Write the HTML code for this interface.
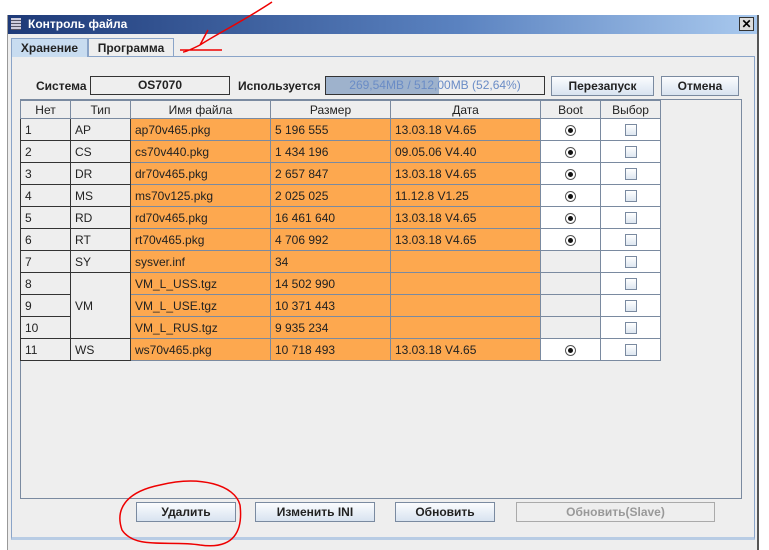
<!DOCTYPE html>
<html><head><style>
*{margin:0;padding:0;box-sizing:border-box}
body{width:769px;height:550px;background:#fff;font-family:"Liberation Sans",Arial,sans-serif;font-size:12px;color:#222;position:relative;overflow:hidden}
.a{position:absolute}
.win{left:7px;top:15px;width:752px;height:535px;background:#eeeeee;border-left:1px solid #999;border-right:2px solid #555}
.title{left:8px;top:15px;width:749px;height:19px;background:linear-gradient(90deg,#1e3a78,#5a82c0 60%,#a9c9ee);color:#fff;font-weight:bold;font-size:12px;line-height:19px;padding-left:20px}
.btn{background:linear-gradient(#fbfcfe,#d8e3f0);border:1px solid #7a8aa0;font-weight:bold;font-size:12px;text-align:center;color:#222}
table{border-collapse:collapse;position:absolute;left:20px;top:100px;table-layout:fixed}
td{height:22px;border:1px solid #7a8aa0;padding-left:4px;font-size:12px;white-space:nowrap}
th{height:18px;border:1px solid #7a8aa0;font-weight:normal;background:#eeeeee;font-size:12px}
td.h{background:#eeeeee;border-color:#333}
td.o{background:#fda84f}
td.w{background:#fff;text-align:center;padding:0}
td.g{background:#eeeeee}
.rb{display:inline-block;width:11px;height:11px;border-radius:50%;border:1px solid #555;background:#fff;position:relative;vertical-align:middle}
.rb:after{content:"";position:absolute;left:2px;top:2px;width:5px;height:5px;border-radius:50%;background:#111}
.cb{display:inline-block;width:12px;height:12px;border:1px solid #7a8aa0;background:linear-gradient(#fff,#dde6f0);vertical-align:middle}
</style></head><body>
<div class="a win"></div>
<div class="a title">Контроль файла</div>
<div class="a" style="left:11px;top:18px;width:10px;height:12px;background:repeating-linear-gradient(#ccd 0 2px,#556 2px 3px)"></div>
<div class="a" style="left:739px;top:17px;width:15px;height:14px;background:#ddd;border:1px solid #333;font-size:12px;line-height:12px;text-align:center;color:#000;font-weight:bold">✕</div>
<!-- tabs -->
<div class="a" style="left:11px;top:56px;width:744px;height:484px;border:1px solid #8aa4c8;border-bottom:3px solid #b8cce4"></div>
<div class="a" style="left:11px;top:38px;width:77px;height:19px;background:#c8dcf0;border:1px solid #8aa4c8;border-bottom:none;font-weight:bold;text-align:center;line-height:18px">Хранение</div>
<div class="a" style="left:88px;top:38px;width:86px;height:18px;background:#eeeeee;border:1px solid #8aa4c8;border-bottom:none;font-weight:bold;text-align:center;line-height:18px">Программа</div>
<!-- top row -->
<div class="a" style="left:36px;top:79px;font-weight:bold">Система</div>
<div class="a" style="left:90px;top:76px;width:140px;height:19px;border:1px solid #333;text-align:center;font-weight:bold;line-height:17px">OS7070</div>
<div class="a" style="left:238px;top:79px;font-weight:bold">Используется</div>
<div class="a" style="left:325px;top:76px;width:220px;height:19px;border:1px solid #333;background:linear-gradient(90deg,#9eb2cc 0 113px,#eeeeee 113px);text-align:center;line-height:17px;color:#6a8cc6">269,54MB / 512,00MB (52,64%)</div>
<div class="a btn" style="left:551px;top:76px;width:103px;height:20px;line-height:18px">Перезапуск</div>
<div class="a btn" style="left:661px;top:76px;width:78px;height:20px;line-height:18px">Отмена</div>
<!-- table panel -->
<div class="a" style="left:20px;top:99px;width:722px;height:400px;border:1px solid #7a8aa0"></div>
<table>
<colgroup><col style="width:50px"><col style="width:60px"><col style="width:140px"><col style="width:120px"><col style="width:150px"><col style="width:60px"><col style="width:60px"></colgroup>
<tr><th>Нет</th><th>Тип</th><th>Имя файла</th><th>Размер</th><th>Дата</th><th>Boot</th><th>Выбор</th></tr>
<tr><td class="h">1</td><td class="h">AP</td><td class="o">ap70v465.pkg</td><td class="o">5 196 555</td><td class="o">13.03.18 V4.65</td><td class="w"><span class="rb"></span></td><td class="w"><span class="cb"></span></td></tr>
<tr><td class="h">2</td><td class="h">CS</td><td class="o">cs70v440.pkg</td><td class="o">1 434 196</td><td class="o">09.05.06 V4.40</td><td class="w"><span class="rb"></span></td><td class="w"><span class="cb"></span></td></tr>
<tr><td class="h">3</td><td class="h">DR</td><td class="o">dr70v465.pkg</td><td class="o">2 657 847</td><td class="o">13.03.18 V4.65</td><td class="w"><span class="rb"></span></td><td class="w"><span class="cb"></span></td></tr>
<tr><td class="h">4</td><td class="h">MS</td><td class="o">ms70v125.pkg</td><td class="o">2 025 025</td><td class="o">11.12.8 V1.25</td><td class="w"><span class="rb"></span></td><td class="w"><span class="cb"></span></td></tr>
<tr><td class="h">5</td><td class="h">RD</td><td class="o">rd70v465.pkg</td><td class="o">16 461 640</td><td class="o">13.03.18 V4.65</td><td class="w"><span class="rb"></span></td><td class="w"><span class="cb"></span></td></tr>
<tr><td class="h">6</td><td class="h">RT</td><td class="o">rt70v465.pkg</td><td class="o">4 706 992</td><td class="o">13.03.18 V4.65</td><td class="w"><span class="rb"></span></td><td class="w"><span class="cb"></span></td></tr>
<tr><td class="h">7</td><td class="h">SY</td><td class="o">sysver.inf</td><td class="o">34</td><td class="o"></td><td class="g"></td><td class="w"><span class="cb"></span></td></tr>
<tr><td class="h">8</td><td class="h" rowspan="3">VM</td><td class="o">VM_L_USS.tgz</td><td class="o">14 502 990</td><td class="o"></td><td class="g"></td><td class="w"><span class="cb"></span></td></tr>
<tr><td class="h">9</td><td class="o">VM_L_USE.tgz</td><td class="o">10 371 443</td><td class="o"></td><td class="g"></td><td class="w"><span class="cb"></span></td></tr>
<tr><td class="h">10</td><td class="o">VM_L_RUS.tgz</td><td class="o">9 935 234</td><td class="o"></td><td class="g"></td><td class="w"><span class="cb"></span></td></tr>
<tr><td class="h">11</td><td class="h">WS</td><td class="o">ws70v465.pkg</td><td class="o">10 718 493</td><td class="o">13.03.18 V4.65</td><td class="w"><span class="rb"></span></td><td class="w"><span class="cb"></span></td></tr>
</table>
<!-- buttons -->
<div class="a btn" style="left:136px;top:502px;width:100px;height:20px;line-height:18px">Удалить</div>
<div class="a btn" style="left:255px;top:502px;width:120px;height:20px;line-height:18px">Изменить INI</div>
<div class="a btn" style="left:395px;top:502px;width:100px;height:20px;line-height:18px">Обновить</div>
<div class="a" style="left:516px;top:502px;width:199px;height:20px;line-height:18px;border:1px solid #aaa;text-align:center;font-weight:bold;color:#999">Обновить(Slave)</div>
<!-- red annotations -->
<svg class="a" style="left:0;top:0" width="769" height="550">
<path d="M272 2 C245 20 215 35 200 45 L208 30 M200 45 C190 50 185 52 183 52 M180 50 L222 50" stroke="#e00" stroke-width="1.5" fill="none"/>
<path d="M160 485 C200 475 235 485 240 505 C243 530 235 550 200 545 C170 540 135 550 122 530 C115 510 125 492 160 485" stroke="#e00" stroke-width="1.5" fill="none"/>
</svg>
</body></html>
